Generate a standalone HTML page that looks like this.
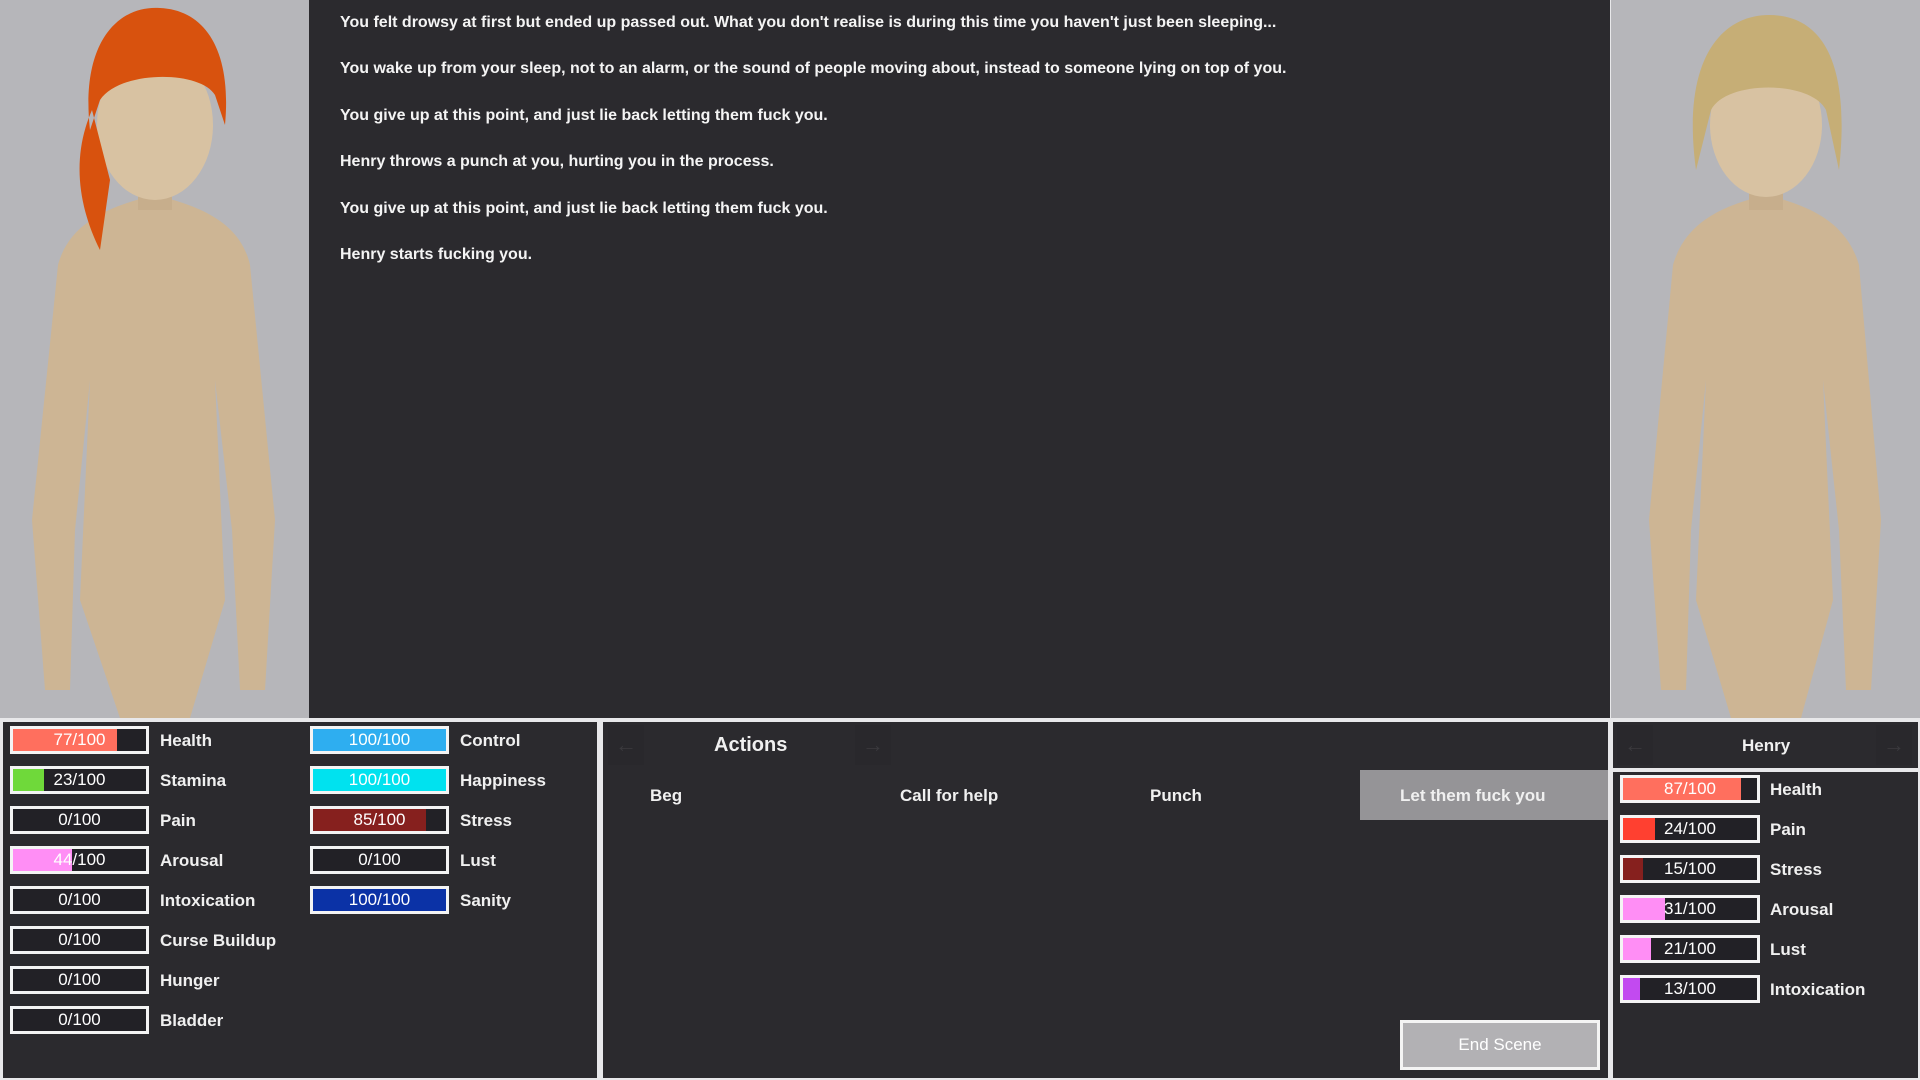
<!DOCTYPE html>
<html><head><meta charset="utf-8"><style>
*{margin:0;padding:0;box-sizing:border-box}
body{width:1920px;height:1080px;background:#e8e8ea;position:relative;overflow:hidden;font-family:"Liberation Sans",sans-serif;color:#fff}
.abs{position:absolute}
.portrait{background:#b6b6ba;top:0;height:718px;width:309px;overflow:hidden}
.story{left:309px;top:0;width:1301px;height:718px;background:#2b2a2e}
.story p{position:absolute;left:31px;font-size:16px;font-weight:bold;white-space:nowrap;color:#f4f4f4}
.panel{background:#2b2a2e;border:2px solid #e8e8ea}
.bar{position:absolute;height:28px;border:3px solid #f4f4f4;background:#222126;font-size:17px;text-align:center;line-height:22px;overflow:hidden}
.bar i{position:absolute;left:0;top:0;bottom:0}
.bar span{position:relative}
.lbl{position:absolute;font-size:17px;font-weight:bold;line-height:28px;color:#f0f0f0}
.btn{position:absolute;font-size:17px;font-weight:bold;color:#f0f0f0}
.arr{position:absolute;background:#29282c;width:36px;height:40px;color:#3a393d;font-size:22px;text-align:center;line-height:40px}
</style></head><body>

<div class="abs portrait" style="left:0">
<svg width="309" height="718" viewBox="0 0 309 718">
<path d="M155 195 C115 205 70 220 58 265 L32 520 L45 690 L70 690 L75 530 L90 380 L80 600 L120 718 L190 718 L225 600 L215 380 L232 530 L240 690 L265 690 L275 520 L250 265 C240 220 195 205 155 195Z" fill="#cdb594"/>
<rect x="138" y="170" width="34" height="40" fill="#c7ae8c"/>
<ellipse cx="155" cy="125" rx="58" ry="75" fill="#d8c2a2"/>
<path d="M90 130 C80 40 120 5 160 8 C205 10 232 50 225 125 L215 95 C200 70 120 70 100 100 Z M92 110 C70 160 80 210 100 250 L110 180 Z" fill="#d8520e"/>
</svg></div>

<div class="abs story">
<p style="top:14px">You felt drowsy at first but ended up passed out. What you don't realise is during this time you haven't just been sleeping...</p>
<p style="top:60px">You wake up from your sleep, not to an alarm, or the sound of people moving about, instead to someone lying on top of you.</p>
<p style="top:107px">You give up at this point, and just lie back letting them fuck you.</p>
<p style="top:153px">Henry throws a punch at you, hurting you in the process.</p>
<p style="top:200px">You give up at this point, and just lie back letting them fuck you.</p>
<p style="top:246px">Henry starts fucking you.</p>
</div>

<div class="abs portrait" style="left:1611px">
<svg width="309" height="718" viewBox="0 0 309 718">
<path d="M155 195 C115 205 75 220 62 265 L38 520 L50 690 L75 690 L80 530 L95 380 L85 600 L120 718 L190 718 L222 600 L212 380 L228 530 L235 690 L260 690 L270 520 L248 265 C235 220 195 205 155 195Z" fill="#cdb594"/>
<rect x="138" y="170" width="34" height="40" fill="#c7ae8c"/>
<ellipse cx="155" cy="125" rx="56" ry="72" fill="#d8c2a2"/>
<path d="M85 170 C70 60 110 15 158 15 C210 15 240 60 228 170 L215 110 C200 80 115 80 100 110 Z" fill="#c6ae76"/>
</svg></div>

<div class="abs panel" style="left:1px;top:720px;width:598px;height:360px"></div>
<div class="bar" style="left:10px;top:726px;width:139px"><i style="width:78%;background:#ff6f5e"></i><span>77/100</span></div>
<div class="bar" style="left:10px;top:766px;width:139px"><i style="width:23%;background:#6fd93a"></i><span>23/100</span></div>
<div class="bar" style="left:10px;top:806px;width:139px"><span>0/100</span></div>
<div class="bar" style="left:10px;top:846px;width:139px"><i style="width:44%;background:#ff8ef5"></i><span>44/100</span></div>
<div class="bar" style="left:10px;top:886px;width:139px"><span>0/100</span></div>
<div class="bar" style="left:10px;top:926px;width:139px"><span>0/100</span></div>
<div class="bar" style="left:10px;top:966px;width:139px"><span>0/100</span></div>
<div class="bar" style="left:10px;top:1006px;width:139px"><span>0/100</span></div>
<div class="lbl" style="left:160px;top:727px">Health</div>
<div class="lbl" style="left:160px;top:767px">Stamina</div>
<div class="lbl" style="left:160px;top:807px">Pain</div>
<div class="lbl" style="left:160px;top:847px">Arousal</div>
<div class="lbl" style="left:160px;top:887px">Intoxication</div>
<div class="lbl" style="left:160px;top:927px">Curse Buildup</div>
<div class="lbl" style="left:160px;top:967px">Hunger</div>
<div class="lbl" style="left:160px;top:1007px">Bladder</div>

<div class="bar" style="left:310px;top:726px;width:139px"><i style="width:100%;background:#2eaef0"></i><span>100/100</span></div>
<div class="bar" style="left:310px;top:766px;width:139px"><i style="width:100%;background:#00e2ef"></i><span>100/100</span></div>
<div class="bar" style="left:310px;top:806px;width:139px"><i style="width:85%;background:#86201e"></i><span>85/100</span></div>
<div class="bar" style="left:310px;top:846px;width:139px"><span>0/100</span></div>
<div class="bar" style="left:310px;top:886px;width:139px"><i style="width:100%;background:#0b32a6"></i><span>100/100</span></div>
<div class="lbl" style="left:460px;top:727px">Control</div>
<div class="lbl" style="left:460px;top:767px">Happiness</div>
<div class="lbl" style="left:460px;top:807px">Stress</div>
<div class="lbl" style="left:460px;top:847px">Lust</div>
<div class="lbl" style="left:460px;top:887px">Sanity</div>

<div class="abs panel" style="left:601px;top:720px;width:1009px;height:360px"></div>
<div class="arr" style="left:608px;top:725px">←</div>
<div class="arr" style="left:855px;top:725px">→</div>
<div class="btn" style="left:714px;top:734px;font-size:20px">Actions</div>
<div class="btn" style="left:650px;top:786px">Beg</div>
<div class="btn" style="left:900px;top:786px">Call for help</div>
<div class="btn" style="left:1150px;top:786px">Punch</div>
<div class="abs" style="left:1360px;top:770px;width:248px;height:50px;background:#959497"></div>
<div class="btn" style="left:1400px;top:786px">Let them fuck you</div>
<div class="abs" style="left:1400px;top:1020px;width:200px;height:50px;background:#b2b1b4;border:3px solid #f4f4f4;text-align:center;line-height:44px;font-size:17px">End Scene</div>

<div class="abs panel" style="left:1611px;top:720px;width:309px;height:50px"></div>
<div class="arr" style="left:1617px;top:725px">←</div>
<div class="arr" style="left:1876px;top:725px">→</div>
<div class="btn" style="left:1742px;top:736px">Henry</div>
<div class="abs panel" style="left:1611px;top:770px;width:309px;height:310px"></div>
<div class="bar" style="left:1620px;top:775px;width:140px"><i style="width:88%;background:#ff6f5e"></i><span>87/100</span></div>
<div class="bar" style="left:1620px;top:815px;width:140px"><i style="width:24%;background:#ff4030"></i><span>24/100</span></div>
<div class="bar" style="left:1620px;top:855px;width:140px"><i style="width:15%;background:#86201e"></i><span>15/100</span></div>
<div class="bar" style="left:1620px;top:895px;width:140px"><i style="width:31%;background:#ff8ef5"></i><span>31/100</span></div>
<div class="bar" style="left:1620px;top:935px;width:140px"><i style="width:21%;background:#ff8ef5"></i><span>21/100</span></div>
<div class="bar" style="left:1620px;top:975px;width:140px"><i style="width:13%;background:#c24af0"></i><span>13/100</span></div>
<div class="lbl" style="left:1770px;top:776px">Health</div>
<div class="lbl" style="left:1770px;top:816px">Pain</div>
<div class="lbl" style="left:1770px;top:856px">Stress</div>
<div class="lbl" style="left:1770px;top:896px">Arousal</div>
<div class="lbl" style="left:1770px;top:936px">Lust</div>
<div class="lbl" style="left:1770px;top:976px">Intoxication</div>
</body></html>
